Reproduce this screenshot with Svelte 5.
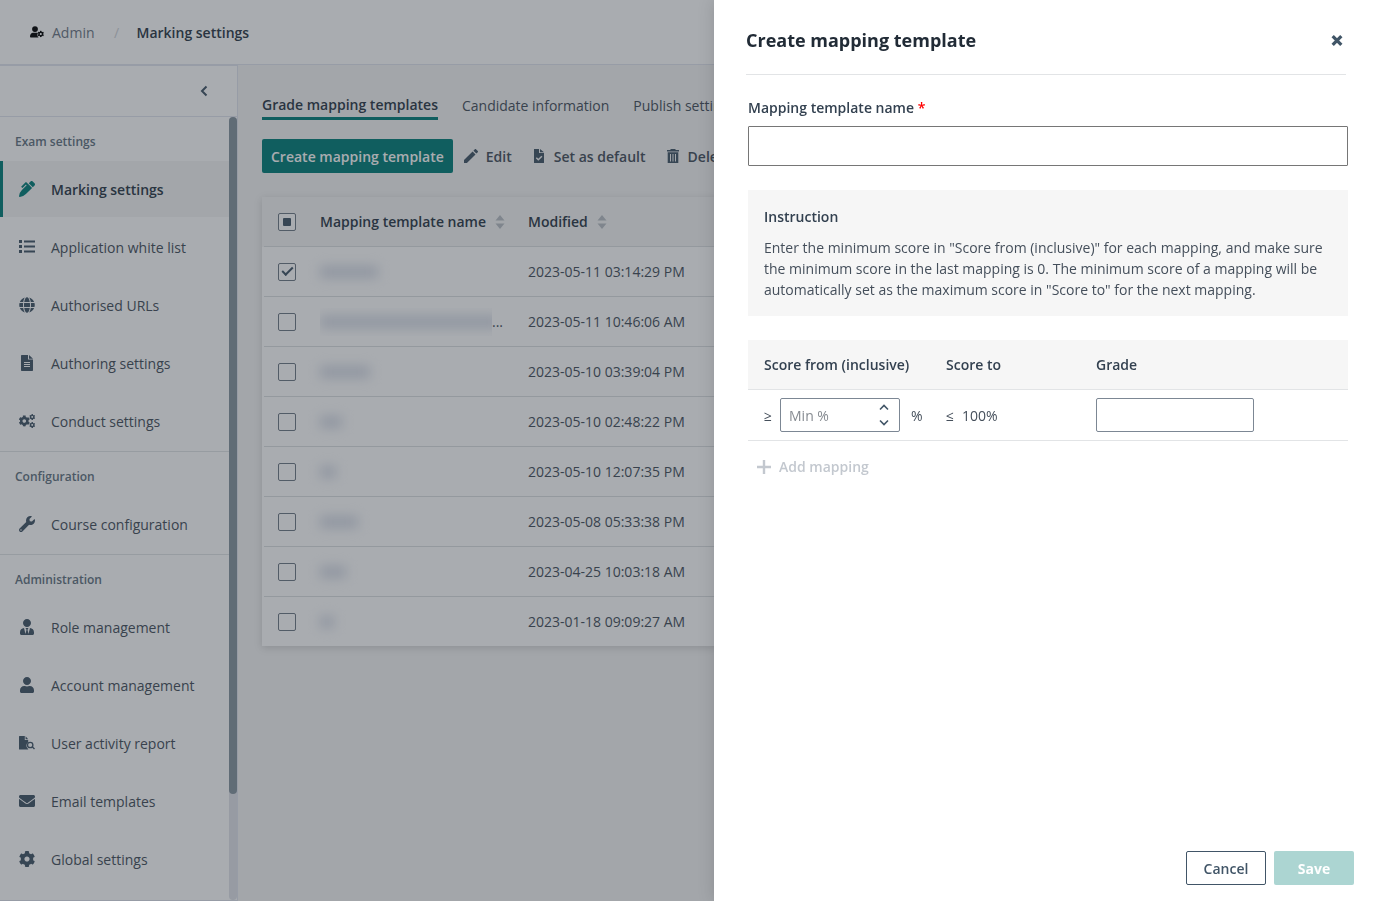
<script>
	const cog = 'M487.4 315.7l-42.6-24.6c4.3-23.2 4.3-47 0-70.2l42.6-24.6c4.9-2.8 7.1-8.6 5.5-14-11.1-35.6-30-67.8-54.7-94.6-3.8-4.1-10-5.1-14.8-2.3L380.8 110c-17.9-15.4-38.5-27.3-60.8-35.1V25.8c0-5.6-3.9-10.5-9.4-11.7-36.7-8.2-74.3-7.8-109.2 0-5.5 1.2-9.4 6.1-9.4 11.7V75c-22.2 7.9-42.8 19.8-60.8 35.1L88.7 85.5c-4.9-2.8-11-1.9-14.8 2.3-24.7 26.7-43.6 58.9-54.7 94.6-1.7 5.4.6 11.2 5.5 14L67.3 221c-4.3 23.2-4.3 47 0 70.2l-42.6 24.6c-4.9 2.8-7.1 8.6-5.5 14 11.1 35.6 30 67.8 54.7 94.6 3.8 4.1 10 5.1 14.8 2.3l42.6-24.6c17.9 15.4 38.5 27.3 60.8 35.1v49.2c0 5.6 3.9 10.5 9.4 11.7 36.7 8.2 74.3 7.8 109.2 0 5.5-1.2 9.4-6.1 9.4-11.7v-49.2c22.2-7.9 42.8-19.8 60.8-35.1l42.6 24.6c4.9 2.8 11 1.9 14.8-2.3 24.7-26.7 43.6-58.9 54.7-94.6 1.5-5.5-.7-11.3-5.6-14.1zM256 336c-44.1 0-80-35.9-80-80s35.9-80 80-80 80 35.9 80 80-35.9 80-80 80z';

	const sections = [
		{
			title: 'Exam settings',
			items: [
				{ label: 'Marking settings', icon: 'penAlt', active: true },
				{ label: 'Application white list', icon: 'list' },
				{ label: 'Authorised URLs', icon: 'globe' },
				{ label: 'Authoring settings', icon: 'file' },
				{ label: 'Conduct settings', icon: 'cogs' }
			]
		},
		{
			title: 'Configuration',
			items: [{ label: 'Course configuration', icon: 'wrench' }]
		},
		{
			title: 'Administration',
			items: [
				{ label: 'Role management', icon: 'userTie' },
				{ label: 'Account management', icon: 'user' },
				{ label: 'User activity report', icon: 'fileSearch' },
				{ label: 'Email templates', icon: 'envelope' },
				{ label: 'Global settings', icon: 'cog' }
			]
		}
	];

	// template names are hidden, only their length is kept
	let rows = $state([
		{ width: 58, modified: '2023-05-11 03:14:29 PM', checked: true },
		{ width: 180, modified: '2023-05-11 10:46:06 AM', checked: false, cut: true },
		{ width: 50, modified: '2023-05-10 03:39:04 PM', checked: false },
		{ width: 22, modified: '2023-05-10 02:48:22 PM', checked: false },
		{ width: 16, modified: '2023-05-10 12:07:35 PM', checked: false },
		{ width: 38, modified: '2023-05-08 05:33:38 PM', checked: false },
		{ width: 26, modified: '2023-04-25 10:03:18 AM', checked: false },
		{ width: 14, modified: '2023-01-18 09:09:27 AM', checked: false }
	]);

	let open = $state(true);
	let name = $state('');
	let min = $state(null);
	let grade = $state('');

	let count = $derived(rows.filter((r) => r.checked).length);
	let canSave = $derived(name !== '' && min === 0 && grade !== '');

	function toggleAll(e) {
		for (const row of rows) {
			row.checked = e.target.checked;
		}
	}

	function step(by) {
		min = Math.min(100, Math.max(0, (min ?? 0) + by));
	}
</script>

{#snippet icon(id)}
	{#if id === 'penAlt'}
		<svg class="icon" viewBox="0 0 512 512"><path d="M497.94 74.17l-60.11-60.11c-18.75-18.75-49.16-18.75-67.91 0l-56.55 56.55 128.02 128.02 56.55-56.55c18.75-18.75 18.75-49.15 0-67.89zm-246.8-20.53c-15.62-15.62-40.94-15.62-56.56 0L75.8 172.43c-6.25 6.25-6.25 16.38 0 22.62l22.63 22.63c6.25 6.25 16.38 6.25 22.63 0l101.82-101.82 22.63 22.62L93.95 290.03A327.038 327.038 0 0 0 .17 485.11l-.03.23c-1.7 15.28 11.21 28.2 26.49 26.51a327.02 327.02 0 0 0 195.34-93.8l196.79-196.79-82.77-82.77-84.85-84.85z" /></svg>
	{:else if id === 'list'}
		<svg class="icon" viewBox="0 0 16 16"><path d="M0 1h3v3H0zM0 6h3v3H0zM0 11h3v3H0zM5 1.500h11v2H5zM5 6.500h11v2H5zM5 11.500h11v2H5z" /></svg>
	{:else if id === 'globe'}
		<svg class="icon" viewBox="-8 0 512 512"><path d="M336.5 160C322 70.7 287.8 8 248 8s-74 62.7-88.5 152h177zM152 256c0 22.2 1.2 43.5 3.3 64h185.3c2.1-20.5 3.3-41.8 3.3-64s-1.2-43.5-3.3-64H155.3c-2.1 20.5-3.3 41.8-3.3 64zm324.7-96c-28.6-67.9-86.5-120.4-158-141.6 24.4 33.8 41.2 84.7 50 141.6h108zM177.2 18.4C105.8 39.6 47.8 92.1 19.3 160h108c8.7-56.9 25.5-107.8 49.9-141.6zM487.4 192H372.7c2.1 21 3.3 42.5 3.3 64s-1.2 43-3.3 64h114.6c5.5-20.5 8.6-41.8 8.6-64s-3.1-43.5-8.5-64zM120 256c0-21.5 1.2-43 3.3-64H8.6C3.2 212.5 0 233.8 0 256s3.2 43.5 8.6 64h114.6c-2-21-3.2-42.5-3.2-64zm39.5 96c14.5 89.3 48.7 152 88.5 152s74-62.7 88.5-152h-177zm159.3 141.6c71.4-21.2 129.4-73.7 158-141.6h-108c-8.8 56.9-25.6 107.8-50 141.6zM19.3 352c28.6 67.9 86.5 120.4 158 141.6-24.4-33.8-41.2-84.7-50-141.6h-108z" /></svg>
	{:else if id === 'file'}
		<svg class="icon" viewBox="0 0 16 16"><path fill-rule="evenodd" d="M2.700 0H9v4.500h5V15.300a.7.700 0 0 1-.7.700H2.700a.7.700 0 0 1-.7-.7V.700A.7.700 0 0 1 2.700 0zM10 0l4 3.800h-4zM5 7v1h6V7zm0 2v1h6V9zm0 2v1h6v-1z" /></svg>
	{:else if id === 'cogs'}
		<svg class="icon" viewBox="0 0 16 16">
			<path transform="translate(-.4 2.300) scale(.0222)" d={cog} />
			<path transform="translate(10.200 1) scale(.0118)" d={cog} />
			<path transform="translate(10.200 9) scale(.0118)" d={cog} />
		</svg>
	{:else if id === 'wrench'}
		<svg class="icon" viewBox="0 0 512 512"><path d="M507.73 109.1c-2.24-9.03-13.54-12.09-20.12-5.51l-74.36 74.36-67.88-11.31-11.31-67.88 74.36-74.36c6.62-6.62 3.43-17.9-5.66-20.16-47.38-11.74-99.55.91-136.58 37.93-39.64 39.64-50.55 97.1-34.05 147.2L18.74 402.76c-24.99 24.99-24.99 65.51 0 90.5 24.99 24.99 65.51 24.99 90.5 0l213.21-213.21c50.12 16.71 107.47 5.68 147.37-34.22 37.07-37.07 49.7-89.32 37.91-136.73zM64 472c-13.25 0-24-10.75-24-24 0-13.26 10.75-24 24-24s24 10.74 24 24c0 13.25-10.75 24-24 24z" /></svg>
	{:else if id === 'userTie'}
		<svg class="icon" viewBox="-32 0 512 512"><path d="M224 256c70.7 0 128-57.3 128-128S294.7 0 224 0 96 57.3 96 128s57.3 128 128 128zm95.8 32.6L272 480l-32-136 32-56h-96l32 56-32 136-47.8-191.4C56.9 292 0 350.3 0 422.4V464c0 26.5 21.5 48 48 48h352c26.5 0 48-21.5 48-48v-41.6c0-72.1-56.9-130.4-128.2-133.8z" /></svg>
	{:else if id === 'user'}
		<svg class="icon" viewBox="-32 0 512 512"><path d="M224 256c70.7 0 128-57.3 128-128S294.7 0 224 0 96 57.3 96 128s57.3 128 128 128zm89.6 32h-16.7c-22.2 10.2-46.9 16-72.9 16s-50.6-5.8-72.9-16h-16.7C60.2 288 0 348.2 0 422.4V464c0 26.5 21.5 48 48 48h352c26.5 0 48-21.5 48-48v-41.6c0-74.2-60.2-134.4-134.4-134.4z" /></svg>
	{:else if id === 'userCog'}
		<svg class="icon" viewBox="0 0 14 14">
			<path d="M5 1.200a2.900 2.900 0 1 1 0 5.800 2.900 2.900 0 0 1 0-5.800zM3 7.800h4.300c.3 0 .6.200.6.5-.9 1.300-.7 2.800.7 4.200H.8a.8.800 0 0 1-.8-.8C0 9.500 1.200 7.800 3 7.800z" />
			<path transform="translate(7.500 5.700) scale(.0128)" d={cog} />
		</svg>
	{:else if id === 'fileSearch'}
		<svg class="icon" viewBox="0 0 16 16">
			<path d="M.6 1h5.200v4h3.400v2.200a4 4 0 0 0-.5 6.300l.5.500v.5H.6a.6.600 0 0 1-.6-.6V1.600A.6.600 0 0 1 .6 1zM6.600 1.200l2.600 3H6.600z" />
			<circle cx="11.200" cy="10" r="2.700" fill="none" stroke="currentColor" stroke-width="1.300" />
			<path d="M12.800 12.300l1-.9 2.200 2.100-1 1z" />
		</svg>
	{:else if id === 'envelope'}
		<svg class="icon" viewBox="0 0 512 512"><path d="M502.3 190.8c3.9-3.1 9.7-.2 9.7 4.7V400c0 26.5-21.5 48-48 48H48c-26.5 0-48-21.5-48-48V195.6c0-5 5.7-7.8 9.7-4.7 22.4 17.4 52.1 39.5 154.1 113.6 21.1 15.4 56.7 47.8 92.2 47.6 35.7.3 72-32.8 92.3-47.6 102-74.1 131.6-96.3 154-113.7zM256 320c23.2.4 56.6-29.2 73.4-41.4 132.7-96.3 142.8-104.7 173.4-128.7 5.8-4.5 9.2-11.5 9.2-18.9v-19c0-26.5-21.5-48-48-48H48c-26.5 0-48 21.5-48 48v19c0 7.4 3.4 14.3 9.2 18.9 30.6 23.9 40.7 32.4 173.4 128.7 16.8 12.2 50.2 41.8 73.4 41.4z" /></svg>
	{:else if id === 'cog'}
		<svg class="icon" viewBox="10 8 492 496"><path d={cog} /></svg>
	{:else if id === 'pencil'}
		<svg class="icon" viewBox="3 3 18 18"><path d="M20.710 7.040c.39-.39.390-1.040 0-1.410l-2.340-2.340c-.37-.39-1.020-.39-1.410 0l-1.840 1.830 3.750 3.750M3 17.250V21h3.750L17.810 9.930l-3.750-3.750L3 17.250z" /></svg>
	{:else if id === 'fileCheck'}
		<svg class="icon" viewBox="0 0 14 14">
			<path d="M2 0h5v4h5v9.500a.5.500 0 0 1-.5.500h-9a.5.500 0 0 1-.5-.5zM8 0l4 3.300H8z" />
			<path class="cutout" d="M4.300 8.800l2 2 3.600-3.600" />
		</svg>
	{:else if id === 'trash'}
		<svg class="icon" viewBox="0 0 14 14"><path fill-rule="evenodd" d="M4.500 0h5v1H13v1.500H1V1h3.500zM1.700 3.300h10.600V14H1.700zM4 5v7.500h1V5zm2.500 0v7.500h1V5zM9 5v7.500h1V5z" /></svg>
	{:else if id === 'plus'}
		<svg class="icon" viewBox="0 0 14 14"><path d="M5.800 0h2.400v5.800H14v2.400H8.200V14H5.800V8.200H0V5.800h5.800z" /></svg>
	{/if}
{/snippet}

{#snippet sorter()}
	<svg class="sorter" viewBox="0 0 10 14"><path d="M5 0l4.500 5.500h-9zM5 14L.5 8.500h9z" /></svg>
{/snippet}

<div class="page">
	<header class="topbar">
		<a class="crumb" href="#admin">{@render icon('userCog')}Admin</a>
		<span class="slash">/</span>
		<span class="current">Marking settings</span>
	</header>

	<div class="body">
		<aside class="sidebar">
			<div class="collapse">
				<button aria-label="Collapse menu">
					<svg viewBox="0 0 8 12"><path d="M6.500 1.500L2 6l4.500 4.500" /></svg>
				</button>
			</div>
			<div class="scroller">
				<nav>
					{#each sections as section}
						<div class="section">
							<h2>{section.title}</h2>
							{#each section.items as item}
								<a class="item" class:active={item.active} href="#{item.icon}">
									{@render icon(item.icon)}
									{item.label}
								</a>
							{/each}
						</div>
					{/each}
				</nav>
				<div class="track"><div class="thumb"></div></div>
			</div>
		</aside>

		<main>
			<div class="tabs">
				<a class="tab active" href="#grade">Grade mapping templates</a>
				<a class="tab" href="#candidate">Candidate information</a>
				<a class="tab" href="#publish">Publish settings</a>
			</div>

			<div class="actions">
				<button class="create" onclick={() => (open = true)}>Create mapping template</button>
				<button class="action">{@render icon('pencil')}Edit</button>
				<button class="action">{@render icon('fileCheck')}Set as default</button>
				<button class="action">{@render icon('trash')}Delete</button>
			</div>

			<table class="templates">
				<thead>
					<tr>
						<th class="check">
							<input
								type="checkbox"
								aria-label="Select all"
								checked={count === rows.length}
								indeterminate={count > 0 && count < rows.length}
								onchange={toggleAll}
							/>
						</th>
						<th class="name"><span class="head">Mapping template name {@render sorter()}</span></th>
						<th><span class="head">Modified {@render sorter()}</span></th>
					</tr>
				</thead>
				<tbody>
					{#each rows as row}
						<tr>
							<td class="check"><input type="checkbox" aria-label="Select row" bind:checked={row.checked} /></td>
							<td class="name">
								<div class="masked">
									<span class="clip" class:cut={row.cut}><span class="blob" style="width: {row.width}px"></span></span>
									{#if row.cut}<span>...</span>{/if}
								</div>
							</td>
							<td>{row.modified}</td>
						</tr>
					{/each}
				</tbody>
			</table>
		</main>
	</div>
</div>

{#if open}
	<div class="overlay"></div>
	<div class="drawer" role="dialog" aria-labelledby="drawer-title">
		<div class="drawer-head">
			<h1 id="drawer-title">Create mapping template</h1>
			<button class="close" aria-label="Close" onclick={() => (open = false)}>
				<svg viewBox="0 0 12 12"><path d="M2 2l8 8M10 2l-8 8" /></svg>
			</button>
		</div>

		<form class="drawer-body" id="mapping-form" onsubmit={(e) => e.preventDefault()}>
			<label class="label" for="template-name">Mapping template name <span class="required">*</span></label>
			<input class="full" id="template-name" type="text" bind:value={name} />

			<div class="instruction">
				<h3>Instruction</h3>
				<p>
					Enter the minimum score in "Score from (inclusive)" for each mapping, and make sure the
					minimum score in the last mapping is 0. The minimum score of a mapping will be
					automatically set as the maximum score in "Score to" for the next mapping.
				</p>
			</div>

			<table class="mapping">
				<thead>
					<tr>
						<th class="from">Score from (inclusive)</th>
						<th class="to">Score to</th>
						<th>Grade</th>
					</tr>
				</thead>
				<tbody>
					<tr>
						<td class="from">
							<div class="score">
								<span class="sign">≥</span>
								<div class="number">
									<input type="number" aria-label="Score from" placeholder="Min %" min="0" max="100" bind:value={min} />
									<div class="steps">
										<button type="button" aria-label="Increase" onclick={() => step(1)}>
											<svg viewBox="0 0 10 7"><path d="M1 5.500L5 1.500l4 4" /></svg>
										</button>
										<button type="button" aria-label="Decrease" onclick={() => step(-1)}>
											<svg viewBox="0 0 10 7"><path d="M1 1.500l4 4 4-4" /></svg>
										</button>
									</div>
								</div>
								<span class="percent">%</span>
							</div>
						</td>
						<td class="to">
							<div class="score"><span class="sign">≤</span>100%</div>
						</td>
						<td><input class="grade" type="text" aria-label="Grade" bind:value={grade} /></td>
					</tr>
				</tbody>
			</table>

			<button class="add" type="button" disabled={min === null}>{@render icon('plus')}Add mapping</button>
		</form>

		<div class="drawer-foot">
			<button class="cancel" onclick={() => (open = false)}>Cancel</button>
			<button class="save" type="submit" form="mapping-form" disabled={!canSave}>Save</button>
		</div>
	</div>
{/if}

<style>
	:global(body) {
		margin: 0;
		overflow: hidden;
		background: #f5f5f5;
		font-family: 'Open Sans', 'Noto Sans', sans-serif;
		font-size: 14px;
		line-height: 21px;
		color: #454f5b;
	}

	button,
	input {
		box-sizing: border-box;
		font: inherit;
		color: inherit;
		margin: 0;
	}

	button {
		display: flex;
		align-items: center;
		justify-content: center;
		padding: 0;
		border: none;
		background: none;
		cursor: pointer;
	}

	a {
		color: inherit;
		text-decoration: none;
	}

	h1,
	h2,
	h3,
	p {
		margin: 0;
	}

	table {
		width: 100%;
		border-collapse: separate;
		border-spacing: 0;
		table-layout: fixed;
		text-align: left;
	}

	th {
		font-weight: 600;
	}

	.icon {
		width: 16px;
		height: 16px;
		flex: none;
		color: #415567;
		fill: currentColor;
	}

	.page {
		display: flex;
		flex-direction: column;
		height: 100vh;
	}

	.topbar {
		display: flex;
		align-items: center;
		box-sizing: border-box;
		height: 65px;
		flex: none;
		padding-left: 30px;
		border-bottom: 1px solid #e2e5ee;
		background: white;
	}

	.crumb {
		display: flex;
		align-items: center;
		gap: 8px;
		color: #6c7684;
	}

	.crumb .icon {
		width: 14px;
		height: 14px;
		color: black;
	}

	.slash {
		width: 42px;
		padding-left: 2px;
		box-sizing: border-box;
		text-align: center;
		color: #cfd3d8;
	}

	.current {
		font-weight: 600;
		color: #2b3846;
	}

	.body {
		display: flex;
		flex: 1;
		min-height: 0;
	}

	.sidebar {
		display: flex;
		flex-direction: column;
		box-sizing: border-box;
		width: 238px;
		flex: none;
		border: 1px solid #e2e5ee;
		border-left: none;
		background: white;
	}

	.collapse {
		display: flex;
		align-items: center;
		justify-content: flex-end;
		height: 50px;
		flex: none;
		padding-right: 29px;
		border-bottom: 1px solid #e2e5ee;
	}

	.collapse svg {
		width: 8px;
		height: 12px;
		fill: none;
		stroke: #415567;
		stroke-width: 2;
	}

	.scroller {
		display: flex;
		flex: 1;
		min-height: 0;
	}

	nav {
		flex: 1;
		overflow: hidden;
	}

	.track {
		width: 8px;
		border-radius: 4px;
		background: #e1e3e9;
	}

	.thumb {
		height: calc(100% - 106px);
		border-radius: 4px;
		background: #86949f;
	}

	.section + .section {
		border-top: 1px solid #e2e4e6;
	}

	h2 {
		padding: 16px 15px 10px;
		font-size: 12px;
		line-height: 18px;
		font-weight: 600;
		color: #637381;
	}

	.item {
		display: flex;
		align-items: center;
		gap: 16px;
		box-sizing: border-box;
		height: 56px;
		margin-bottom: 2px;
		padding-left: 16px;
		border-left: 3px solid transparent;
	}

	.item.active {
		border-color: #007d78;
		background: #f5f5f5;
		font-weight: 600;
		color: #2b3846;
	}

	.item.active .icon {
		color: #007d78;
	}

	main {
		flex: 1;
		min-width: 0;
		padding: 28px 24px 0;
	}

	.tabs {
		display: flex;
		gap: 24px;
		overflow: hidden;
		white-space: nowrap;
	}

	.tab {
		padding-top: 2px;
	}

	.tab.active {
		padding: 1px 0 2px;
		border-bottom: 3px solid #007d78;
		font-weight: 600;
		color: #2b3846;
	}

	.actions {
		display: flex;
		align-items: center;
		gap: 20px;
		margin: 19px 0 24px;
		white-space: nowrap;
	}

	.create {
		height: 34px;
		margin-right: -9px;
		padding: 0 9px;
		border-radius: 2px;
		background: #007d78;
		font-weight: 600;
		color: white;
	}

	.action {
		gap: 8px;
		font-weight: 600;
	}

	.action .icon,
	.add .icon {
		width: 14px;
		height: 14px;
	}

	.cutout {
		fill: none;
		stroke: #f5f5f5;
		stroke-width: 1.5;
	}

	.templates {
		padding: 0 2px;
		background: linear-gradient(#f5f5f5 50px, white 50px);
		box-shadow: 0 2px 8px rgb(0 0 0 / 0.15);
	}

	.templates th,
	.templates td {
		box-sizing: border-box;
		height: 50px;
		padding: 0;
		border-bottom: 1px solid #dde0e2;
	}

	.templates tbody tr:last-child td {
		height: 49px;
		border-bottom: none;
	}

	.templates th {
		color: #2b3846;
	}

	.templates .check {
		width: 56px;
		padding-left: 14px;
	}

	.templates .name {
		width: 208px;
	}

	.head {
		display: flex;
		align-items: center;
		gap: 9px;
	}

	.sorter {
		width: 10px;
		height: 14px;
		fill: #b9bfc5;
	}

	.masked {
		display: flex;
		align-items: center;
	}

	.clip {
		padding: 8px 0;
	}

	.cut {
		width: 172px;
		overflow: hidden;
	}

	.blob {
		display: block;
		height: 12px;
		background: #d6dbe6;
		filter: blur(6px);
	}

	input[type='checkbox'] {
		display: grid;
		place-content: center;
		appearance: none;
		width: 18px;
		height: 18px;
		border: 1px solid #6f7a85;
		border-radius: 2px;
		background: white;
	}

	input[type='checkbox']:checked::before {
		content: '';
		width: 11px;
		height: 6px;
		margin-bottom: 3px;
		border: solid #415567;
		border-width: 0 0 2px 2px;
		box-sizing: border-box;
		transform: rotate(-45deg);
	}

	input[type='checkbox']:indeterminate::before {
		content: '';
		width: 8px;
		height: 8px;
		border-radius: 1px;
		background: #415567;
	}

	.overlay {
		position: fixed;
		inset: 0;
		background: rgb(40 48 58 / 0.4);
	}

	.drawer {
		position: fixed;
		top: 0;
		right: 0;
		bottom: 0;
		display: flex;
		flex-direction: column;
		width: 664px;
		max-width: 100%;
		background: white;
		box-shadow: 0 0 16px rgb(0 0 0 / 0.15);
	}

	.drawer-head {
		display: flex;
		align-items: center;
		justify-content: space-between;
		margin: 0 32px;
		padding: 27px 0 20px;
		border-bottom: 1px solid #e2e4e6;
	}

	h1 {
		font-size: 18px;
		line-height: 27px;
		font-weight: 700;
		color: #212b36;
	}

	.close svg {
		width: 18px;
		height: 13px;
		stroke: #415567;
		stroke-width: 3;
	}

	.drawer-body {
		flex: 1;
		padding: 22px 30px 0 34px;
		overflow: auto;
	}

	.label {
		display: block;
		margin-bottom: 8px;
		font-weight: 600;
		color: #334150;
	}

	.required {
		color: red;
	}

	.full {
		display: block;
		width: 100%;
		height: 40px;
		padding: 0 8px;
		border: 1px solid #767676;
		border-radius: 1px;
	}

	.instruction {
		margin: 24px 0;
		padding: 16px;
		background: #f6f6f6;
	}

	h3 {
		margin-bottom: 10px;
		font-size: 14px;
		font-weight: 600;
		color: #334150;
	}

	.mapping th,
	.mapping td {
		box-sizing: border-box;
		height: 50px;
		padding: 0 16px;
		border-bottom: 1px solid #e2e4e6;
	}

	.mapping td {
		height: 51px;
	}

	.mapping th {
		background: #f6f6f6;
		color: #334150;
	}

	.mapping .from {
		width: 182px;
		padding-right: 0;
	}

	.mapping .to {
		width: 150px;
	}

	.score {
		display: flex;
		align-items: center;
	}

	.sign {
		width: 16px;
		flex: none;
	}

	.percent {
		margin-left: 11px;
	}

	.number {
		display: flex;
		box-sizing: border-box;
		width: 120px;
		height: 34px;
		border: 1px solid #7c8794;
		border-radius: 2px;
	}

	.number input {
		flex: 1;
		min-width: 0;
		padding: 0 0 0 8px;
		border: none;
		outline: none;
		background: none;
		appearance: textfield;
	}

	.number input::-webkit-inner-spin-button {
		display: none;
	}

	.number input::placeholder {
		color: #868b91;
	}

	.steps {
		display: flex;
		flex-direction: column;
		justify-content: center;
		gap: 8px;
		width: 30px;
	}

	.steps svg {
		width: 10px;
		height: 7px;
		fill: none;
		stroke: #415567;
		stroke-width: 1.6;
	}

	.grade {
		display: block;
		width: 158px;
		height: 34px;
		padding: 0 8px;
		border: 1px solid #7c8794;
		border-radius: 2px;
	}

	.add {
		gap: 8px;
		margin: 15px 9px;
		font-weight: 600;
	}

	.add:disabled,
	.add:disabled .icon {
		color: #c3c8cf;
		cursor: default;
	}

	.drawer-foot {
		display: flex;
		justify-content: flex-end;
		gap: 8px;
		padding: 16px 24px;
	}

	.drawer-foot button {
		width: 80px;
		height: 34px;
		border-radius: 2px;
	}

	.cancel {
		border: 1px solid #415567;
		font-weight: 600;
		color: #415567;
	}

	.save {
		background: #007d78;
		font-weight: 700;
		color: white;
	}

	.save:disabled {
		background: #acd5d2;
		cursor: default;
	}
</style>
